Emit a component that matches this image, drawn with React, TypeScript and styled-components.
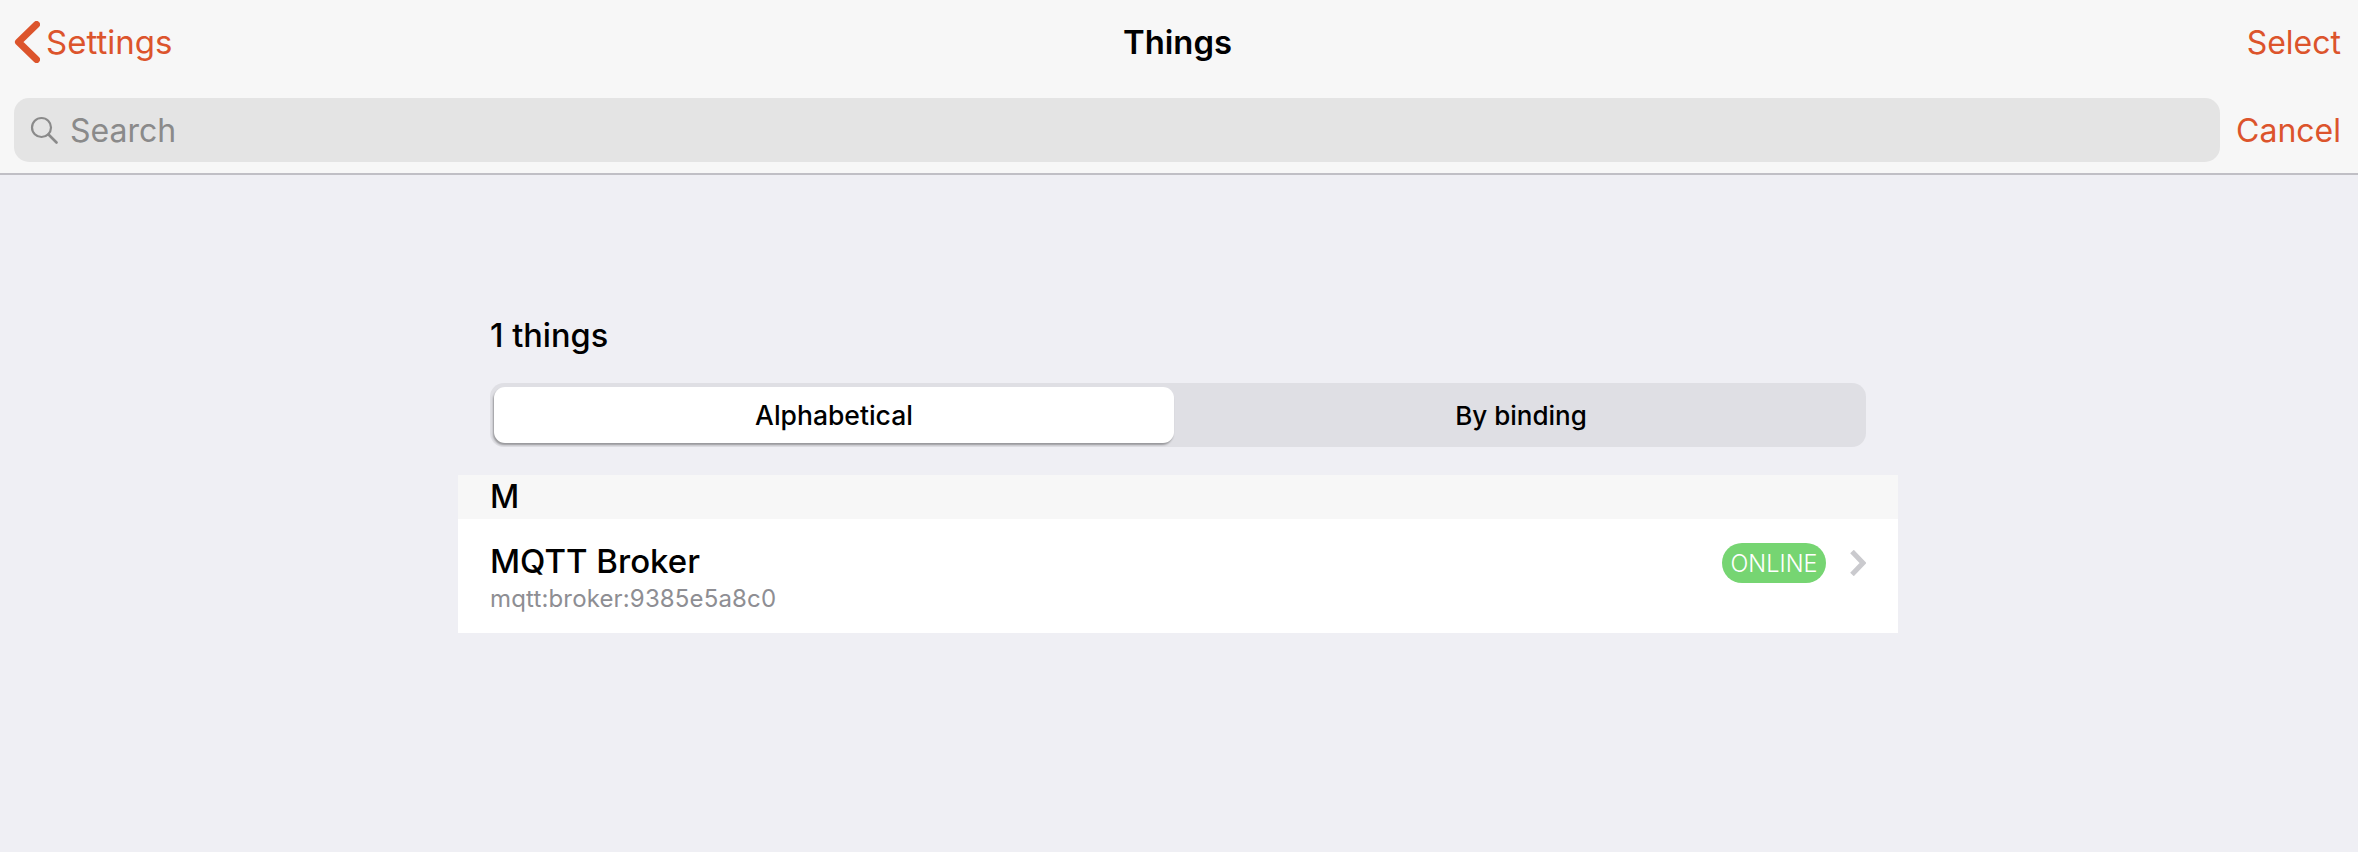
import React from "react";
import styled, { createGlobalStyle } from "styled-components";

const Global = createGlobalStyle`
  html, body { margin: 0; padding: 0; background: #efeff4; }
  body { font-family: Inter, "Liberation Sans", sans-serif; -webkit-font-smoothing: antialiased; }
  * { box-sizing: border-box; }
`;

const ACCENT = "#dc542c";

const Page = styled.div`
  width: 2358px;
  height: 852px;
  background: #efeff4;
  overflow: hidden;
`;

const Header = styled.header`
  height: 175px;
  background: #f7f7f7;
  border-bottom: 2px solid #c0bfc5;
  padding: 0 17px 0 14px;
`;

const NavRow = styled.div`
  height: 84px;
  display: grid;
  grid-template-columns: 1fr auto 1fr;
  align-items: center;
`;

const BackLink = styled.a`
  display: flex;
  align-items: center;
  gap: 6px;
  color: ${ACCENT};
  font-size: 33px;
`;

const Title = styled.h1`
  margin: 0;
  font-size: 32.8px;
  font-weight: 600;
  color: #000;
`;

const NavAction = styled.a`
  justify-self: end;
  color: ${ACCENT};
  font-size: 32px;
`;

const SearchRow = styled.div`
  display: flex;
  align-items: center;
  justify-content: space-between;
  margin-top: 14px;
`;

const SearchField = styled.div`
  width: 2206px;
  height: 64px;
  border-radius: 15px;
  background: #e4e4e4;
  display: flex;
  align-items: center;
  gap: 12px;
  padding-left: 16px;
  color: #8a8a8a;
  font-size: 32px;
`;

const Content = styled.main`
  width: 1440px;
  margin-left: 458px;
  padding-top: 138px;
`;

const Count = styled.h2`
  margin: 0 0 24px 32px;
  height: 46px;
  line-height: 46px;
  font-size: 32.5px;
  font-weight: 500;
  color: #000;
`;

const Segments = styled.div`
  width: 1376px;
  height: 64px;
  margin-left: 32px;
  padding: 4px 0 4px 4px;
  border-radius: 14px;
  background: #dfdfe4;
  display: grid;
  grid-template-columns: 680px 1fr;
`;

const Segment = styled.div<{ $active?: boolean }>`
  display: flex;
  align-items: center;
  justify-content: center;
  border-radius: 11px;
  padding-left: ${(p) => (p.$active ? "0" : "2px")};
  font-size: ${(p) => (p.$active ? "26.5px" : "26px")};
  font-weight: 500;
  color: #000;
  background: ${(p) => (p.$active ? "#fff" : "transparent")};
  box-shadow: ${(p) => (p.$active ? "-1px 2px 2px rgba(0,0,0,0.32)" : "none")};
`;

const SectionHeader = styled.div`
  margin-top: 28px;
  height: 44px;
  line-height: 44px;
  padding-left: 32px;
  background: #f7f7f7;
  font-size: 32px;
  font-weight: 500;
  color: #000;
`;

const Row = styled.div`
  height: 114px;
  background: #fff;
  display: flex;
  align-items: flex-start;
  justify-content: space-between;
  padding: 0 32px;
`;

const RowText = styled.div`
  padding-top: 20px;
`;

const RowTitle = styled.div`
  font-size: 33px;
  line-height: 44px;
  font-weight: 500;
  color: #000;
`;

const RowSub = styled.div`
  font-size: 24px;
  line-height: 31px;
  letter-spacing: 0.15px;
  color: #8e8e93;
`;

const RowMeta = styled.div`
  display: flex;
  align-items: center;
  gap: 24px;
  padding-top: 24px;
`;

const Badge = styled.span`
  width: 104px;
  height: 40px;
  border-radius: 20px;
  background: #76d572;
  color: #fff;
  display: flex;
  align-items: center;
  justify-content: center;
  font-size: 23.5px;
  font-weight: 300;
`;

export default function App() {
  return (
    <Page>
      <Global />
      <Header>
        <NavRow>
          <BackLink>
            <svg width="26" height="42" viewBox="0 0 26 42" aria-hidden="true">
              <path d="M22.5 3.5 L4.5 21 L22.5 38.5" fill="none" stroke={ACCENT} strokeWidth="7" strokeLinecap="round" strokeLinejoin="round" />
            </svg>
            Settings
          </BackLink>
          <Title>Things</Title>
          <NavAction>Select</NavAction>
        </NavRow>
        <SearchRow>
          <SearchField>
            <svg width="28" height="28" viewBox="0 0 28 28" aria-hidden="true">
              <circle cx="11.5" cy="11.5" r="9.5" fill="none" stroke="#8a8a8a" strokeWidth="2.2" />
              <path d="M18.5 18.5 L26.5 26.5" stroke="#8a8a8a" strokeWidth="2.6" strokeLinecap="round" />
            </svg>
            Search
          </SearchField>
          <NavAction>Cancel</NavAction>
        </SearchRow>
      </Header>
      <Content>
        <Count>1 things</Count>
        <Segments>
          <Segment $active>Alphabetical</Segment>
          <Segment>By binding</Segment>
        </Segments>
        <SectionHeader>M</SectionHeader>
        <Row>
          <RowText>
            <RowTitle>MQTT Broker</RowTitle>
            <RowSub>mqtt:broker:9385e5a8c0</RowSub>
          </RowText>
          <RowMeta>
            <Badge>ONLINE</Badge>
            <svg width="16" height="26" viewBox="0 0 16 26" aria-hidden="true">
              <path d="M2 1.5 L13 13 L2 24.5" fill="none" stroke="#cacace" strokeWidth="5" />
            </svg>
          </RowMeta>
        </Row>
      </Content>
    </Page>
  );
}
